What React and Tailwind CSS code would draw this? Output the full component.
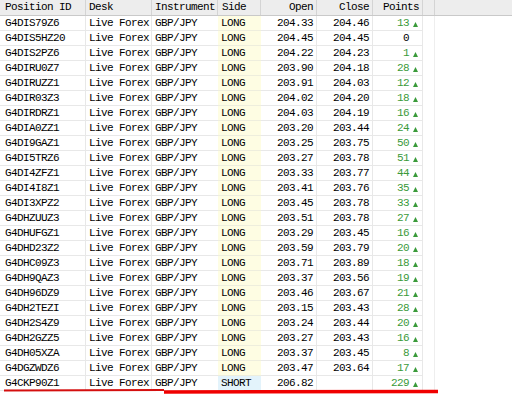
import React from "react";

const rows = [
  ["G4DIS79Z6", "204.33", "204.46", "13"],
  ["G4DIS5HZ20", "204.45", "204.45", "0"],
  ["G4DIS2PZ6", "204.22", "204.23", "1"],
  ["G4DIRU0Z7", "203.90", "204.18", "28"],
  ["G4DIRUZZ1", "203.91", "204.03", "12"],
  ["G4DIR03Z3", "204.02", "204.20", "18"],
  ["G4DIRDRZ1", "204.03", "204.19", "16"],
  ["G4DIA0ZZ1", "203.20", "203.44", "24"],
  ["G4DI9GAZ1", "203.25", "203.75", "50"],
  ["G4DI5TRZ6", "203.27", "203.78", "51"],
  ["G4DI4ZFZ1", "203.33", "203.77", "44"],
  ["G4DI4I8Z1", "203.41", "203.76", "35"],
  ["G4DI3XPZ2", "203.45", "203.78", "33"],
  ["G4DHZUUZ3", "203.51", "203.78", "27"],
  ["G4DHUFGZ1", "203.29", "203.45", "16"],
  ["G4DHD23Z2", "203.59", "203.79", "20"],
  ["G4DHC09Z3", "203.71", "203.89", "18"],
  ["G4DH9QAZ3", "203.37", "203.56", "19"],
  ["G4DH96DZ9", "203.46", "203.67", "21"],
  ["G4DH2TEZI", "203.15", "203.43", "28"],
  ["G4DH2S4Z9", "203.24", "203.44", "20"],
  ["G4DH2GZZ5", "203.27", "203.43", "16"],
  ["G4DH05XZA", "203.37", "203.45", "8"],
  ["G4DGZWDZ6", "203.47", "203.64", "17"],
  ["G4CKP90Z1", "206.82", "", "229", "SHORT"],
];

function Tri() {
  return (
    <svg width="5" height="5" viewBox="0 0 5 5" className="block">
      <polygon points="2.5,0 5,5 0,5" fill="#3a9a3a" />
    </svg>
  );
}

const mono = { fontFamily: '"Liberation Mono", monospace' };

export default function App() {
  return (
    <div
      className="relative w-[512px] h-[394px] bg-white overflow-hidden text-[11px] tracking-[-0.6px] text-black leading-none"
      style={mono}
    >
      <div className="flex h-[16px] bg-[#ededed] border-b border-[#c9c9c9]">
        <div className="w-[86px] pl-[5px] flex items-center border-r border-[#d4d4d4]">Position ID</div>
        <div className="w-[66px] pl-[3px] flex items-center border-r border-[#d4d4d4]">Desk</div>
        <div className="w-[66px] pl-[3px] flex items-center border-r border-[#d4d4d4]">Instrument</div>
        <div className="w-[43px] pl-[4px] flex items-center border-r border-[#d4d4d4]">Side</div>
        <div className="w-[56px] pr-[3px] flex items-center justify-end border-r border-[#d4d4d4]">Open</div>
        <div className="w-[56px] pr-[3px] flex items-center justify-end border-r border-[#d4d4d4]">Close</div>
        <div className="w-[50px] pr-[3px] flex items-center justify-end border-r border-[#d4d4d4]">Points</div>
        <div className="w-[12px] border-r border-[#d4d4d4]"></div>
      </div>
      {rows.map((r, i) => {
        const side = r[4] || "LONG";
        const short = side === "SHORT";
        return (
          <div key={i} className="flex h-[15px]">
            <div className="w-[86px] pl-[5px] flex items-center border-r border-b border-[#e8e8e8]">{r[0]}</div>
            <div className="w-[66px] pl-[3px] flex items-center border-r border-b border-[#e8e8e8]">Live Forex</div>
            <div className="w-[66px] pl-[3px] flex items-center border-b border-[#e8e8e8]">GBP/JPY</div>
            <div
              className={
                short
                  ? "w-[43px] pl-[3px] flex items-center bg-[#e3f3fb] border-b border-[#dbe9ee]"
                  : "w-[43px] pl-[3px] flex items-center bg-[#fefde3] border-b border-[#eeeedd]"
              }
            >
              {side}
            </div>
            <div className="w-[56px] pr-[3px] flex items-center justify-end border-r border-b border-[#e8e8e8]">{r[1]}</div>
            <div className="w-[56px] pr-[3px] flex items-center justify-end border-r border-b border-[#e8e8e8]">{r[2]}</div>
            <div
              className={
                r[3] === "0"
                  ? "w-[50px] pr-[4px] flex items-center justify-end gap-[4px] border-r border-b border-[#e8e8e8] text-black"
                  : "w-[50px] pr-[4px] flex items-center justify-end gap-[4px] border-r border-b border-[#e8e8e8] text-[#3a9a3a]"
              }
            >
              <span>{r[3]}</span>
              <span className="w-[5px] flex items-end h-[8px]">{r[3] === "0" ? null : <Tri />}</span>
            </div>
            <div className="w-[12px] border-r border-[#eeeeee]"></div>
          </div>
        );
      })}
      <svg className="absolute left-0 top-0 pointer-events-none" width="512" height="394">
        <path d="M4 390.5 L164 390" stroke="#d40f0f" strokeWidth="2" fill="none" />
        <path d="M164 392 L438 391.5" stroke="#f00000" strokeWidth="3.5" fill="none" />
      </svg>
    </div>
  );
}
